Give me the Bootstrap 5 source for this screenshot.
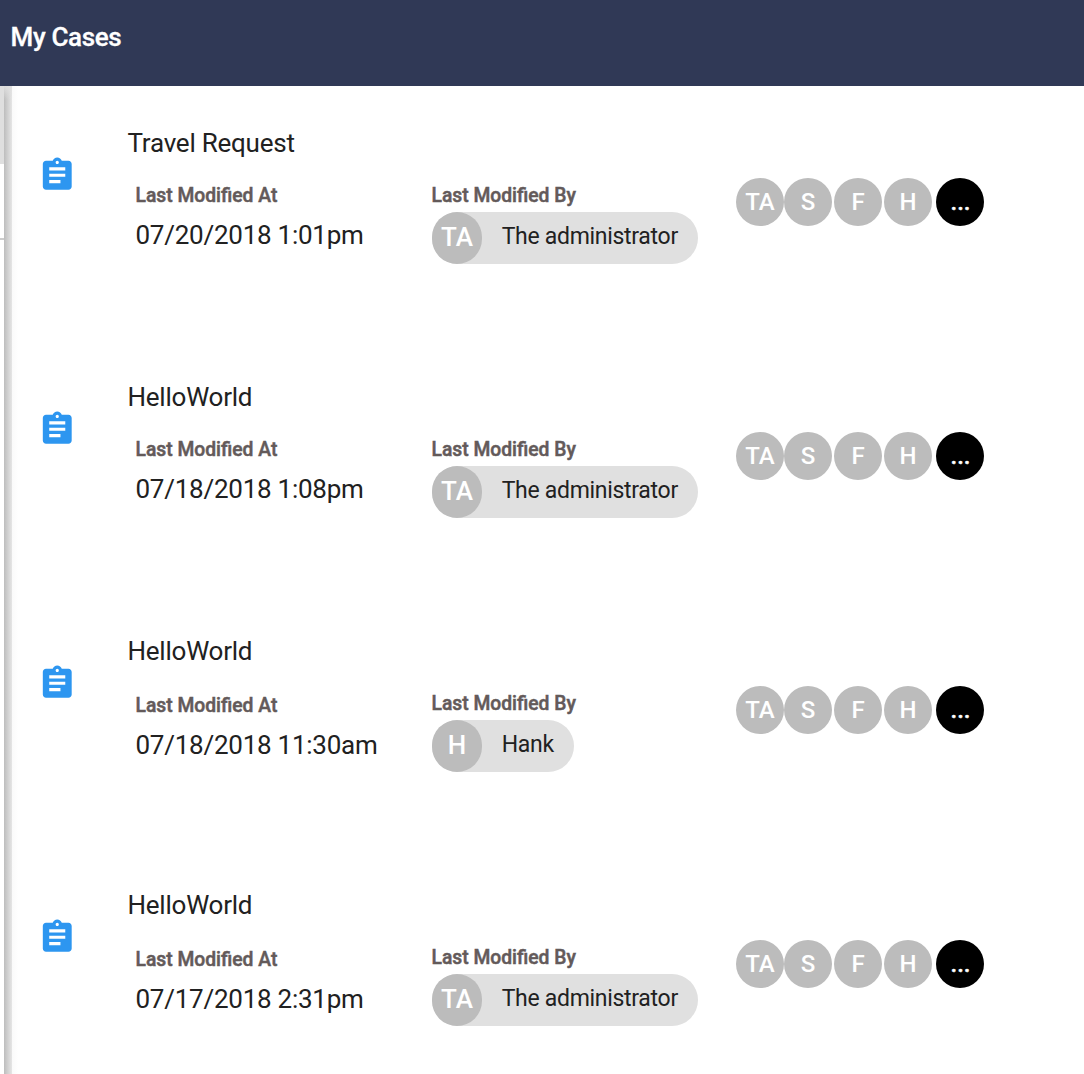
<!DOCTYPE html>
<html lang="en">
<head>
<meta charset="utf-8">
<meta name="viewport" content="width=device-width, initial-scale=1">
<title>My Cases</title>
<link href="https://cdn.jsdelivr.net/npm/bootstrap@5.3.0/dist/css/bootstrap.min.css" rel="stylesheet">
<style>
body{font-family:Roboto,"Liberation Sans",sans-serif;color:#212121;height:1074px;overflow:hidden;background:#fff}
.app-head{height:86px;background:#303956;padding:20px 10.500px 0}
.app-title{font-size:26px;line-height:35px;font-weight:500;letter-spacing:-.35px;-webkit-text-stroke:.3px #fff}
.app-body{height:988px}
.side-edge{width:4px}
.side-active{height:78px;background:#dfdfdf}
.side-item{height:76px;border-bottom:2px solid #ccc}
.side-shadow{width:8px;background:linear-gradient(180deg,rgba(225,225,225,.9),rgba(225,225,225,0) 14px),linear-gradient(90deg,#bdbdbd,#e6e6e6)}
.side-fade{width:6px;background:linear-gradient(90deg,#fafafa,#fff)}
.case-row{height:254px}
.case-icon{width:109.500px;padding:69.500px 0 0 19.500px}
.case-icon svg{width:38.500px;height:38.500px;display:block}
.case-title{font-size:26px;line-height:34px;padding-top:40px;height:93px;letter-spacing:-.23px}
.col-date{width:304.500px;padding-left:8px}
.col-by{width:304px}
.late-date{padding-top:2px}
.field-label{font-size:19.300px;line-height:24px;height:33px;padding-top:5px;font-weight:500;color:#635a5a;-webkit-text-stroke:.5px #635a5a}
.col-by .field-label{margin-left:-.5px}
.field-date{font-size:26px;line-height:34px;padding-top:6px;letter-spacing:-.25px}
.user-chip{height:52px;border-radius:26px;background:#e0e0e0;padding-right:20px;font-size:23px;width:max-content}
.chip-avatar{width:50px;height:52px;border-radius:25px;background:#bcbcbc;color:#fff;font-size:26px;font-weight:500;margin-right:19.700px;padding-bottom:2px}
.chip-name{line-height:30px;padding-bottom:3px;letter-spacing:-.3px}
.people{margin-top:-1px}
.person{width:48px;height:48px;background:#bcbcbc;color:#fff;font-size:24px;font-weight:500;flex:none}
.person.more{background:#000;-webkit-text-stroke:.4px #fff;padding-left:1px}
.person-gap{margin-right:2px}
</style>
<script src="https://cdn.jsdelivr.net/npm/bootstrap@5.3.0/dist/js/bootstrap.bundle.min.js"></script>
</head>
<body>
<svg class="d-none"><symbol id="assignment" viewBox="0 0 24 24"><path fill="#2d96f0" d="M19 3h-4.180C14.400 1.840 13.300 1 12 1c-1.300 0-2.400.840-2.820 2H5c-1.100 0-2 .9-2 2v14c0 1.100.9 2 2 2h14c1.100 0 2-.9 2-2V5c0-1.100-.9-2-2-2zm-7 0c.55 0 1 .45 1 1s-.45 1-1 1-1-.45-1-1 .45-1 1-1zm2 14H7v-2h7v2zm3-4H7v-2h10v2zm0-4H7V7h10v2z"/></symbol></svg>
<header class="app-head text-white"><h1 class="app-title m-0">My Cases</h1></header>
<div class="app-body d-flex">
  <aside class="d-flex flex-shrink-0">
    <div class="side-edge"><div class="side-active"></div><div class="side-item"></div></div>
    <div class="side-shadow"></div><div class="side-fade"></div>
  </aside>
  <main class="flex-grow-1" id="cases">
  </main>
</div>
<script>
const cases = [
  ['Travel Request','07/20/2018 1:01pm','TA','The administrator',''],
  ['HelloWorld','07/18/2018 1:08pm','TA','The administrator',''],
  ['HelloWorld','07/18/2018 11:30am','H','Hank','late-date'],
  ['HelloWorld','07/17/2018 2:31pm','TA','The administrator','late-date']
];
const circle = 'person rounded-circle d-flex align-items-center justify-content-center';
document.getElementById('cases').innerHTML = cases.map(([title, date, ini, name, cls]) => `
<article class="case-row d-flex">
  <div class="case-icon flex-shrink-0"><svg><use href="#assignment"/></svg></div>
  <div class="flex-grow-1">
    <h2 class="case-title fw-normal m-0">${title}</h2>
    <div class="d-flex align-items-start">
      <div class="col-date flex-shrink-0 ${cls}"><div class="field-label">Last Modified At</div><div class="field-date">${date}</div></div>
      <div class="col-by flex-shrink-0"><div class="field-label">Last Modified By</div>
        <div class="user-chip d-flex align-items-center"><span class="chip-avatar d-flex align-items-center justify-content-center">${ini}</span><span class="chip-name">${name}</span></div></div>
      <div class="people d-flex">${['TA','S','F','H'].map((p, i) => `<span class="${circle} ${i > 0 && i < 3 ? 'person-gap' : ''}">${p}</span>`).join('')}<span class="${circle} more ms-1">...</span></div>
    </div>
  </div>
</article>`).join('');
</script>
</body>
</html>
